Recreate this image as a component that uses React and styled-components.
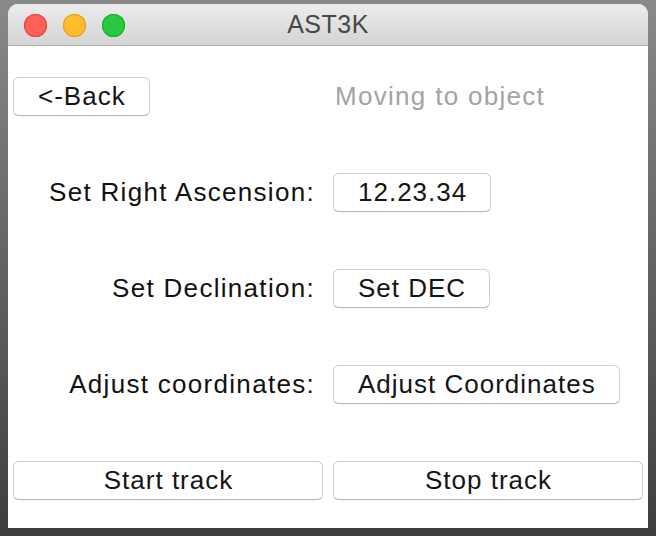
import React from "react";
import styled, { createGlobalStyle } from "styled-components";

const Global = createGlobalStyle`
  html, body { margin: 0; padding: 0; }
  body {
    width: 656px;
    height: 536px;
    overflow: hidden;
    background: linear-gradient(180deg, #8a8a8a 0%, #6a6a6a 40%, #3e3e3e 100%);
    font-family: "Liberation Sans", Arial, sans-serif;
  }
`;

const Desktop = styled.div`
  width: 656px;
  height: 536px;
  box-sizing: border-box;
  padding: 4px 8px 8px 8px;
  display: flex;
`;

const Window = styled.div`
  flex: 1;
  display: flex;
  flex-direction: column;
  background: #ffffff;
  border-radius: 10px 10px 0 0;
  overflow: hidden;
`;

const TitleBar = styled.div`
  height: 41px;
  flex: none;
  position: relative;
  display: flex;
  align-items: center;
  justify-content: center;
  background: linear-gradient(180deg, #ececec 0%, #d4d4d4 100%);
  border-bottom: 1px solid #b1b1b1;
`;

const Lights = styled.div`
  position: absolute;
  left: 16px;
  top: 10px;
  display: flex;
  gap: 16px;
`;

const Light = styled.span`
  width: 23px;
  height: 23px;
  border-radius: 50%;
  background: ${(p) => p.$c};
  box-shadow: inset 0 0 0 1px ${(p) => p.$b};
`;

const Title = styled.div`
  font-size: 25px;
  color: #474747;
  letter-spacing: 0.5px;
`;

const Content = styled.div`
  flex: 1;
  display: grid;
  grid-template-columns: 320px 320px;
  grid-template-rows: repeat(5, 1fr);
  align-items: center;
  padding-top: 2px;
`;

const Button = styled.button`
  height: 39px;
  box-sizing: border-box;
  padding: 0 23px 0 24px;
  margin: 0 5px;
  justify-self: ${(p) => (p.$wide ? "stretch" : "start")};
  background: #ffffff;
  border: 1px solid #cfcfcf;
  border-bottom-color: #b9b9b9;
  border-radius: 6px;
  box-shadow: 0 1px 1px rgba(0, 0, 0, 0.06);
  font-family: "Liberation Sans", Arial, sans-serif;
  font-size: 26px;
  letter-spacing: 1px;
  color: #151515;
  line-height: 1;
`;

const Label = styled.div`
  justify-self: ${(p) => (p.$left ? "start" : "end")};
  margin: ${(p) => (p.$left ? "0 0 0 7px" : "0 13px 0 0")};
  font-size: 26px;
  letter-spacing: 1.3px;
  color: ${(p) => (p.$muted ? "#a3a3a3" : "#111111")};
`;

export default function App() {
  return (
    <>
      <Global />
      <Desktop>
        <Window>
          <TitleBar>
            <Lights>
              <Light $c="#fe5f57" $b="#e2463f" />
              <Light $c="#febc2e" $b="#e1a116" />
              <Light $c="#28c840" $b="#1aab29" />
            </Lights>
            <Title>AST3K</Title>
          </TitleBar>
          <Content>
            <Button>&lt;-Back</Button>
            <Label $left $muted>Moving to object</Label>
            <Label>Set Right Ascension:</Label>
            <Button>12.23.34</Button>
            <Label>Set Declination:</Label>
            <Button>Set DEC</Button>
            <Label>Adjust coordinates:</Label>
            <Button>Adjust Coordinates</Button>
            <Button $wide>Start track</Button>
            <Button $wide>Stop track</Button>
          </Content>
        </Window>
      </Desktop>
    </>
  );
}
